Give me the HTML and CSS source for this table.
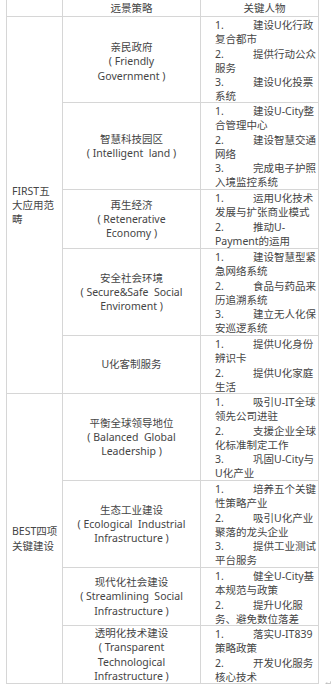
FILE: index.html
```html
<!DOCTYPE html>
<html lang="zh-CN">
<head>
<meta charset="utf-8">
<title>FIRST BEST</title>
<link rel="stylesheet" href="styles.css">
</head>
<body>
<div class="page">
  <div class="grid">
    <div class="cell hd"></div>
    <div class="cell hd">远景策略</div>
    <div class="cell hd hd3">关键人物</div>

    <div class="cell c1 span-first">FIRST五<br>大应用范<br>畴</div>

    <div class="cell c2 c2-first">亲民政府<br>( Friendly<br>Government )</div>
    <div class="cell c3"><span class="n">1.</span>建设U化行政<br>复合都市<br><span class="n">2.</span>提供行动公众<br>服务<br><span class="n">3.</span>建设U化投票<br>系统</div>

    <div class="cell c2">智慧科技园区<br>( Intelligent&nbsp; land )</div>
    <div class="cell c3"><span class="n">1.</span>建设U-City整<br>合管理中心<br><span class="n">2.</span>建设智慧交通<br>网络<br><span class="n">3.</span>完成电子护照<br>入境监控系统</div>

    <div class="cell c2">再生经济<br>( Retenerative<br>Economy )</div>
    <div class="cell c3"><span class="n">1.</span>运用U化技术<br>发展与扩张商业模式<br><span class="n">2.</span>推动U-<br>Payment的运用</div>

    <div class="cell c2">安全社会环境<br>( Secure&amp;Safe&nbsp; Social<br>Enviroment )</div>
    <div class="cell c3"><span class="n">1.</span>建设智慧型紧<br>急网络系统<br><span class="n">2.</span>食品与药品来<br>历追溯系统<br><span class="n">3.</span>建立无人化保<br>安巡逻系统</div>

    <div class="cell c2">U化客制服务</div>
    <div class="cell c3"><span class="n">1.</span>提供U化身份<br>辨识卡<br><span class="n">2.</span>提供U化家庭<br>生活</div>

    <div class="cell c1 span-best">BEST四项<br>关键建设</div>

    <div class="cell c2">平衡全球领导地位<br>( Balanced&nbsp; Global<br>Leadership )</div>
    <div class="cell c3"><span class="n">1.</span>吸引U-IT全球<br>领先公司进驻<br><span class="n">2.</span>支援企业全球<br>化标准制定工作<br><span class="n">3.</span>巩固U-City与<br>U化产业</div>

    <div class="cell c2">生态工业建设<br>( Ecological&nbsp; Industrial<br>Infrastructure )</div>
    <div class="cell c3"><span class="n">1.</span>培养五个关键<br>性策略产业<br><span class="n">2.</span>吸引U化产业<br>聚落的龙头企业<br><span class="n">3.</span>提供工业测试<br>平台服务</div>

    <div class="cell c2">现代化社会建设<br>( Streamlining&nbsp; Social<br>Infrastructure )</div>
    <div class="cell c3"><span class="n">1.</span>健全U-City基<br>本规范与政策<br><span class="n">2.</span>提升U化服<br>务、避免数位落差</div>

    <div class="cell c2">透明化技术建设<br>( Transparent<br>Technological<br>Infrastructure )</div>
    <div class="cell c3"><span class="n">1.</span>落实U-IT839<br>策略政策<br><span class="n">2.</span>开发U化服务<br>核心技术</div>
  </div>
  <svg class="ret" width="7" height="5" viewBox="0 0 7 5"><path d="M6.5 0 V2.5 H1 M2.5 1 L1 2.5 L2.5 4" fill="none" stroke="#b0b0b0" stroke-width="0.8"/></svg>
</div>
</body>
</html>
```
FILE: styles.css
```css
html, body {
  margin: 0;
  background: #ffffff;
}
body {
  font-family: "Noto Sans", "Noto Sans CJK SC", sans-serif;
  font-size: 10.5px;
  line-height: 14.3px;
  color: #454545;
}
.page {
  display: flex;
  align-items: flex-end;
  padding-left: 6px;
}
.grid {
  display: grid;
  grid-template-columns: 55px 137px 117px;
  grid-template-rows: 16px 85px 86px 58px 86px 57px 86px 86px 57px 57px;
  gap: 1px;
  padding: 0 1px 1px 1px;
  background: #d6d6d6;
}
.cell {
  background: #ffffff;
  white-space: nowrap;
}
.hd {
  text-align: center;
  padding-top: 1px;
}
.hd3 {
  padding-left: 10px;
}
.c1 {
  display: flex;
  align-items: center;
  padding-left: 5px;
  grid-column: 1;
}
.span-first {
  grid-row: 2 / span 5;
}
.span-best {
  grid-row: 7 / span 4;
}
.c2 {
  display: flex;
  flex-direction: column;
  justify-content: center;
  text-align: center;
  grid-column: 2;
}
.c2-first {
  padding-top: 4px;
}
.c3 {
  padding: 1px 1px 0 14px;
  grid-column: 3;
}
.n {
  display: inline-block;
  width: 38px;
}
.ret {
  margin-left: 6px;
  margin-bottom: -2px;
}
```
